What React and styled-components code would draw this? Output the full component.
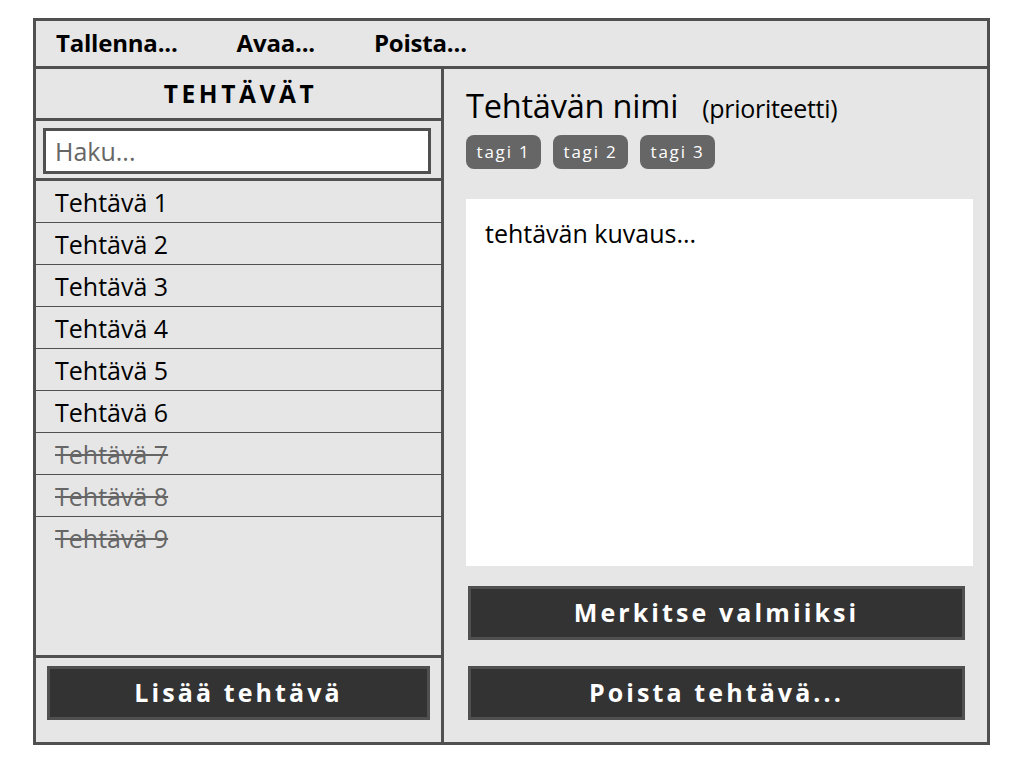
import React from 'react';
import styled, { createGlobalStyle } from 'styled-components';

const GlobalStyle = createGlobalStyle`
    * {
        box-sizing: border-box;
    }

    body {
        margin: 0;
        background: #ffffff;
        font-family: 'Open Sans', 'Noto Sans', sans-serif;
        color: #000000;
    }
`;

const Frame = styled.div`
    width: 957px;
    height: 727px;
    margin: 18px 0 0 33px;
    border: 3px solid #505050;
    background: #e6e6e6;
    display: flex;
    flex-direction: column;
`;

const MenuBar = styled.div`
    height: 48px;
    border-bottom: 3px solid #505050;
    display: flex;
    align-items: center;
    gap: 59px;
    padding: 0 0 2px 20px;
`;

const MenuItem = styled.span`
    font-size: 24px;
    font-weight: 700;
    letter-spacing: -0.2px;
`;

const Body = styled.div`
    flex: 1;
    display: flex;
    min-height: 0;
`;

const Sidebar = styled.div`
    width: 408px;
    border-right: 3px solid #505050;
    display: flex;
    flex-direction: column;
`;

const SidebarHeader = styled.div`
    height: 52px;
    border-bottom: 3px solid #505050;
    display: flex;
    align-items: center;
    justify-content: center;
    font-size: 24.5px;
    font-weight: 700;
    letter-spacing: 3.6px;
    padding-left: 4px;
`;

const SearchArea = styled.div`
    height: 60px;
    border-bottom: 3px solid #505050;
    padding: 7px 10px 4px 7px;
`;

const SearchInput = styled.input`
    width: 100%;
    height: 46px;
    border: 3px solid #505050;
    background: #ffffff;
    padding: 0 9px;
    font-family: 'Open Sans', 'Noto Sans', sans-serif;
    font-size: 25px;
    color: #000000;
    outline: none;

    &::placeholder {
        color: #666666;
    }
`;

const TaskList = styled.div`
    flex: 1;
    display: flex;
    flex-direction: column;
`;

const TaskRow = styled.div`
    height: 42px;
    flex: none;
    border-bottom: ${(props) => (props.last ? 'none' : '1px solid #505050')};
    display: flex;
    align-items: center;
    padding: 0 0 0 19px;
    font-size: 25px;
    color: ${(props) => (props.done ? '#666666' : '#000000')};
    text-decoration: ${(props) => (props.done ? 'line-through' : 'none')};
    text-decoration-thickness: 2px;
`;

const SidebarFooter = styled.div`
    border-top: 3px solid #505050;
    padding: 8px 11px 22px 11px;
`;

const DarkButton = styled.button`
    width: 100%;
    height: 54px;
    background: #333333;
    border: 3px solid #505050;
    color: #ffffff;
    font-family: 'Open Sans', 'Noto Sans', sans-serif;
    font-size: 25px;
    font-weight: 700;
    letter-spacing: 3.1px;
    display: flex;
    align-items: center;
    justify-content: center;
    padding: 0 0 2px 0;
    cursor: pointer;
`;

const Detail = styled.div`
    flex: 1;
    display: flex;
    flex-direction: column;
    padding: 18px 14px 22px 22px;
`;

const TitleRow = styled.div`
    display: flex;
    align-items: baseline;
    gap: 24px;
    height: 38px;
`;

const TaskTitle = styled.span`
    font-size: 32.5px;
    line-height: 38px;
    letter-spacing: -0.2px;
`;

const Priority = styled.span`
    font-size: 25px;
    letter-spacing: -0.3px;
`;

const TagRow = styled.div`
    display: flex;
    gap: 12px;
    margin-top: 10px;
`;

const Tag = styled.span`
    width: 75px;
    height: 34px;
    border-radius: 8px;
    background: #666666;
    color: #ffffff;
    font-size: 17px;
    letter-spacing: 1.8px;
    display: flex;
    align-items: center;
    justify-content: center;
    padding-bottom: 2px;
`;

const Description = styled.div`
    flex: 1;
    margin-top: 30px;
    background: #ffffff;
    padding: 17px 19px;
    font-size: 25px;
`;

const ButtonArea = styled.div`
    display: flex;
    flex-direction: column;
    gap: 26px;
    margin: 20px 8px 0 2px;
`;

const tasks = [
    { name: 'Tehtävä 1' },
    { name: 'Tehtävä 2' },
    { name: 'Tehtävä 3' },
    { name: 'Tehtävä 4' },
    { name: 'Tehtävä 5' },
    { name: 'Tehtävä 6' },
    { name: 'Tehtävä 7', done: true },
    { name: 'Tehtävä 8', done: true },
    { name: 'Tehtävä 9', done: true },
];

const App = () => {
    return (
        <>
            <GlobalStyle />
            <Frame>
                <MenuBar>
                    <MenuItem>Tallenna...</MenuItem>
                    <MenuItem>Avaa...</MenuItem>
                    <MenuItem>Poista...</MenuItem>
                </MenuBar>
                <Body>
                    <Sidebar>
                        <SidebarHeader>TEHTÄVÄT</SidebarHeader>
                        <SearchArea>
                            <SearchInput placeholder="Haku..." />
                        </SearchArea>
                        <TaskList>
                            {tasks.map((task, i) => (
                                <TaskRow key={task.name} done={task.done} last={i === tasks.length - 1}>
                                    {task.name}
                                </TaskRow>
                            ))}
                        </TaskList>
                        <SidebarFooter>
                            <DarkButton>Lisää tehtävä</DarkButton>
                        </SidebarFooter>
                    </Sidebar>
                    <Detail>
                        <TitleRow>
                            <TaskTitle>Tehtävän nimi</TaskTitle>
                            <Priority>(prioriteetti)</Priority>
                        </TitleRow>
                        <TagRow>
                            <Tag>tagi 1</Tag>
                            <Tag>tagi 2</Tag>
                            <Tag>tagi 3</Tag>
                        </TagRow>
                        <Description>tehtävän kuvaus...</Description>
                        <ButtonArea>
                            <DarkButton>Merkitse valmiiksi</DarkButton>
                            <DarkButton>Poista tehtävä...</DarkButton>
                        </ButtonArea>
                    </Detail>
                </Body>
            </Frame>
        </>
    );
};

export default App;
